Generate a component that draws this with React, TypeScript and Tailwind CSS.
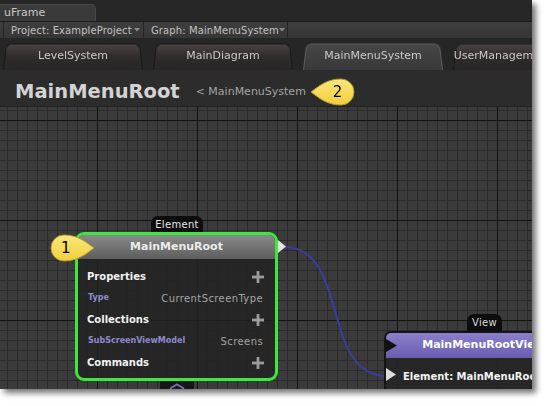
const Caret = () => (
  <svg width="6" height="4" viewBox="0 0 6 4" className="shrink-0">
    <path d="M0 0 L6 0 L3 3.5 Z" fill="#8a8a8a" />
  </svg>
);

const Dropdown = ({ label, width }: { label: string; width: string }) => (
  <div className={`flex h-full items-center border-r border-[#262626] pl-[7px] pr-[3px] ${width}`}>
    <span className="whitespace-nowrap tracking-[0.1px]">{label}</span>
    <span className="ml-auto">
      <Caret />
    </span>
  </div>
);

const Tab = ({ label, active }: { label: string; active?: boolean }) => (
  <div className="relative flex h-[28px] w-[140px] shrink-0 items-center justify-center">
    <div
      className={
        active
          ? 'absolute inset-0 origin-bottom rounded-t-[6px] border border-b-0 border-[#5e5e5e] bg-gradient-to-b from-[#464646] to-[#393939] [transform:perspective(80px)_rotateX(8deg)]'
          : 'absolute inset-0 origin-bottom rounded-t-[6px] border border-b-0 border-[#171717] bg-gradient-to-b from-[#4b4242] via-[#302c2c] to-[#272525] [transform:perspective(80px)_rotateX(8deg)]'
      }
    />
    <span className="relative whitespace-nowrap pt-[1px] text-[11px] text-[#c9c9c9]">{label}</span>
  </div>
);

const Plus = () => (
  <svg width="12" height="12" viewBox="0 0 12 12">
    <rect x="4.6" y="0" width="2.8" height="12" fill="#9c9c9c" />
    <rect x="0" y="4.6" width="12" height="2.8" fill="#9c9c9c" />
  </svg>
);

const Section = ({ label }: { label: string }) => (
  <div className="flex h-[21.5px] items-center justify-between pl-[9px] pr-[11px]">
    <span className="text-[10px] font-bold text-[#f2f2f2]">{label}</span>
    <Plus />
  </div>
);

const Item = ({ type, name }: { type: string; name: string }) => (
  <div className="flex h-[21.5px] items-center justify-between pl-[10px] pr-[12px]">
    <span className="text-[8px] font-bold text-[#8c8ccc]">{type}</span>
    <span className="text-[10px] tracking-[0.4px] text-[#a4a4a4]">{name}</span>
  </div>
);

const Callout = ({ n, flip }: { n: string; flip?: boolean }) => (
  <div className="relative flex h-[28px] w-[46px] items-center">
    <svg width="46" height="28" viewBox="0 0 46 28" className="absolute inset-0">
      <defs>
        <linearGradient id={`cg${n}`} x1="0" y1="0" x2="0" y2="1">
          <stop offset="0" stopColor="#fbe77a" />
          <stop offset="1" stopColor="#f1cf3c" />
        </linearGradient>
      </defs>
      <path
        d={
          flip
            ? 'M45 14 C37 8, 29 1, 15 1 A13 13 0 0 0 15 27 C29 27, 37 20, 45 14 Z'
            : 'M1 14 C9 8, 17 1, 31 1 A13 13 0 0 1 31 27 C17 27, 9 20, 1 14 Z'
        }
        fill={`url(#cg${n})`}
        stroke="#b09a36"
        strokeWidth="1"
      />
    </svg>
    <span
      className={`relative text-[15px] leading-none text-black ${flip ? 'pl-[12px]' : 'pl-[23px]'}`}
    >
      {n}
    </span>
  </div>
);

const Grid = () => (
  <svg className="absolute inset-0 h-full w-full">
    <defs>
      <pattern id="fine" x="7" y="3" width="10" height="10" patternUnits="userSpaceOnUse">
        <path d="M0.5 0 V10 M0 0.5 H10" stroke="#2b2b2b" strokeWidth="1" />
      </pattern>
      <pattern id="major" x="97" y="13" width="100" height="100" patternUnits="userSpaceOnUse">
        <path d="M0.5 0 V100 M0 0.5 H100" stroke="#121212" strokeWidth="1" />
      </pattern>
    </defs>
    <rect width="100%" height="100%" fill="#3b3b3b" />
    <rect width="100%" height="100%" fill="url(#fine)" />
    <rect width="100%" height="100%" fill="url(#major)" />
    <path d="M284 140 C350 140, 320 269, 387 269" fill="none" stroke="#3b3ba0" strokeWidth="2" />
  </svg>
);

export default function App() {
  return (
    <div className="h-[406px] w-[548px] bg-white font-['DejaVu_Sans',sans-serif]">
      <div className="flex h-[389px] w-[532px] flex-col overflow-hidden bg-[#272727] shadow-[4px_4px_6px_rgba(0,0,0,0.55)]">
        <div className="h-[21px] pt-[4px]">
          <div className="flex h-[17px] w-[96px] items-center rounded-tr-[5px] border-r border-t border-[#484848] bg-[#3a3a3a] pl-[4px] text-[11px] text-[#c9c9c9]">
            uFrame
          </div>
        </div>

        <div className="flex h-[17px] items-center border-t border-[#1c1c1c] bg-gradient-to-b from-[#3e3e3e] to-[#363636] text-[10px] text-[#c2c2c2]">
          <div className="h-full w-[4px] border-r border-[#262626]" />
          <Dropdown label="Project: ExampleProject" width="w-[140px]" />
          <Dropdown label="Graph: MainMenuSystem" width="w-[144px]" />
        </div>

        <div className="flex h-[32px] items-end gap-[10px] bg-[#262626] pl-[3px]">
          <Tab label="LevelSystem" />
          <Tab label="MainDiagram" />
          <Tab label="MainMenuSystem" active />
          <Tab label="UserManagementSystem" />
        </div>

        <div className="flex h-[37px] items-center border-b border-[#222] bg-[#2c2c2c] pl-[15px] pt-[8px]">
          <h1 className="text-[19.5px] font-bold text-[#d3d3d3]">MainMenuRoot</h1>
          <span className="ml-[16px] text-[11px] text-[#a3a3a3]">&lt; MainMenuSystem</span>
          <div className="ml-[4px]">
            <Callout n="2" />
          </div>
        </div>

        <div className="relative flex-1">
          <Grid />

          {/* Element node */}
          <div className="absolute left-[75px] top-[125px] w-[203px]">
            <div className="absolute left-[76px] top-[-16px] flex h-[16px] w-[52px] items-center justify-center rounded-t-[7px] bg-[#0d0d0d] text-[10px] tracking-[0.3px] text-[#e6e6e6]">
              Element
            </div>
            <div className="overflow-hidden rounded-[9px] border-[3px] border-[#3ce83c] bg-[#232323]/85">
              <div className="flex h-[24px] items-center justify-center bg-gradient-to-b from-[#8a8a8a] to-[#5e5e5e] text-[11px] font-bold text-[#ececec]">
                MainMenuRoot
              </div>
              <div className="pb-[4px] pt-[7px]">
                <Section label="Properties" />
                <Item type="Type" name="CurrentScreenType" />
                <Section label="Collections" />
                <Item type="SubScreenViewModel" name="Screens" />
                <Section label="Commands" />
              </div>
            </div>
            <svg width="8" height="13" viewBox="0 0 8 13" className="absolute left-[203px] top-[8px]">
              <path d="M0 0 L8 6.5 L0 13 Z" fill="#e2e2e2" />
            </svg>
            <div className="absolute left-[85px] top-[149px] flex h-[10px] w-[34px] justify-center bg-[#161616] pt-[2px]">
              <svg width="16" height="6" viewBox="0 0 16 6">
                <path d="M1 5.5 L8 1.5 L15 5.5" fill="none" stroke="#6d6dae" strokeWidth="2" />
              </svg>
            </div>
          </div>

          {/* Callout 1 */}
          <div className="absolute left-[49px] top-[127px]">
            <Callout n="1" flip />
          </div>

          {/* View node */}
          <div className="absolute left-[384px] top-[224px] w-[199px]">
            <div className="absolute left-[83px] top-[-17px] flex h-[17px] w-[35px] items-center justify-center rounded-t-[7px] bg-[#0d0d0d] text-[10px] tracking-[0.3px] text-[#d8d8d8]">
              View
            </div>
            <div className="overflow-hidden rounded-tl-[7px] border-[2px] border-[#151515] bg-[#262626]/90">
              <div className="relative flex h-[25px] items-center justify-center bg-gradient-to-b from-[#8c7fcc] to-[#6a5db0] text-[11px] font-bold text-white">
                <svg width="11" height="13" viewBox="0 0 11 13" className="absolute left-0 top-[6px]">
                  <path d="M0 0 L11 6.5 L0 13 Z" fill="#111" />
                </svg>
                MainMenuRootView
              </div>
              <div className="relative flex h-[40px] items-start pl-[17px] pt-[11px]">
                <svg width="10" height="13" viewBox="0 0 10 13" className="absolute left-0 top-[10px]">
                  <path d="M0 0 L10 6.5 L0 13 Z" fill="#dcdcdc" />
                </svg>
                <span className="whitespace-nowrap text-[10px] font-bold text-[#f2f2f2]">Element: MainMenuRoot</span>
              </div>
            </div>
          </div>
        </div>
      </div>
    </div>
  );
}
